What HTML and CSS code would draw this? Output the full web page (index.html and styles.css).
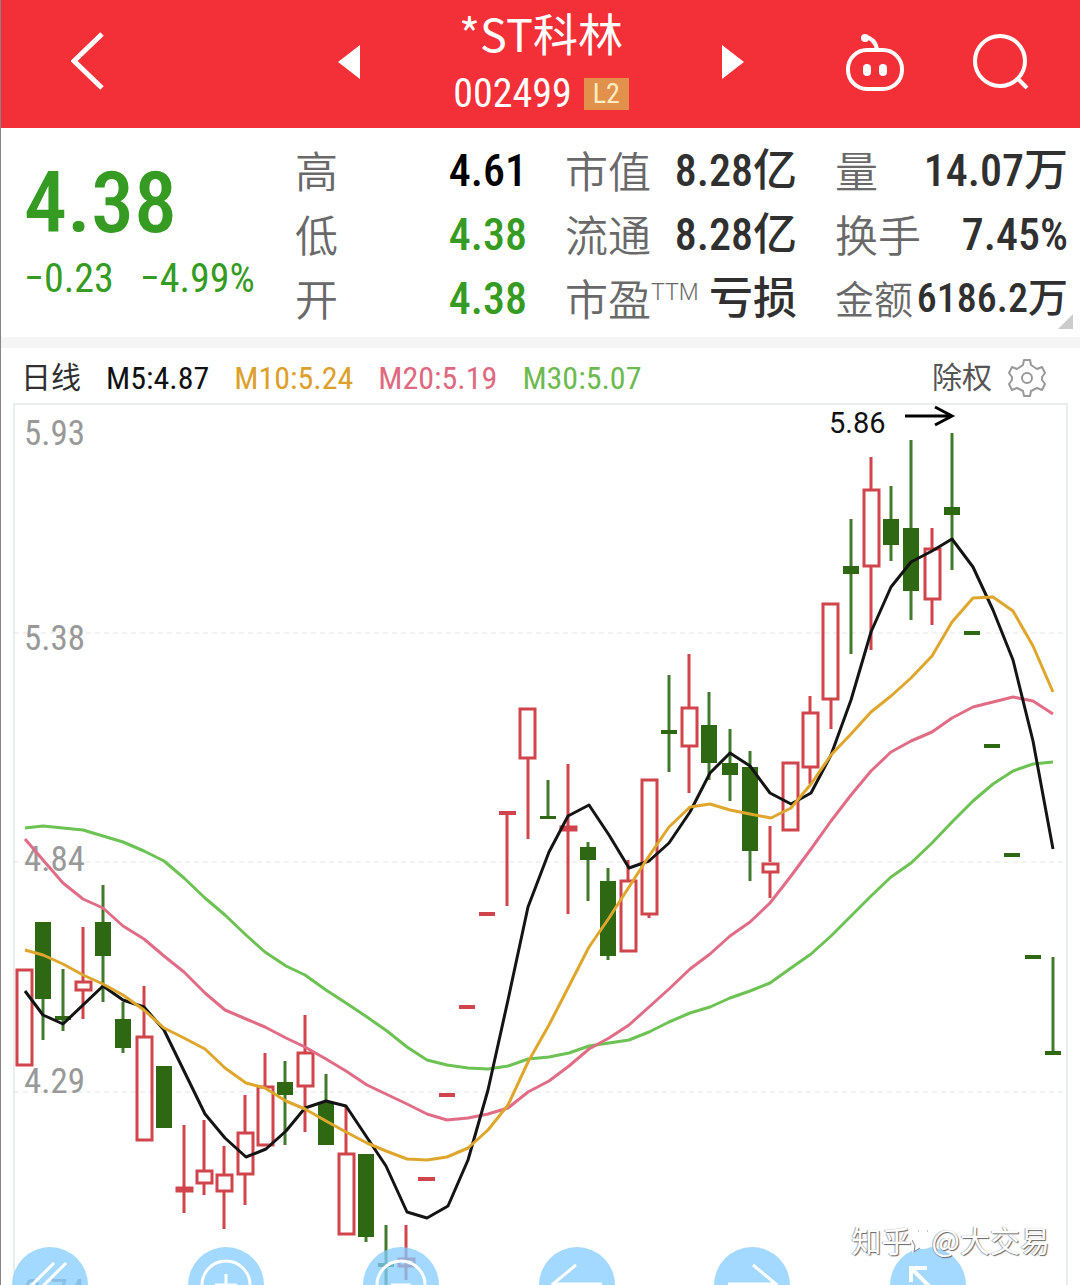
FILE: index.html
```
<!DOCTYPE html>
<html lang="zh-CN">
<head>
<meta charset="utf-8">
<meta name="viewport" content="width=device-width, initial-scale=1">
<title>*ST科林 002499</title>
<link rel="stylesheet" href="styles.css">
</head>
<body>
<header class="topbar">
  <button class="icon-btn" type="button" aria-label="返回">
    <svg width="34" height="60" viewBox="0 0 34 60"><path d="M31 2 3 29 31 56" fill="none" stroke="#fff" stroke-width="5"/></svg>
  </button>
  <div class="stock-nav">
    <button class="icon-btn" type="button" aria-label="上一只">
      <svg width="22" height="34" viewBox="0 0 22 34"><path d="M22 0v34L0 17z" fill="#fff"/></svg>
    </button>
    <div class="stock">
      <h1 class="stock-name">*ST科林</h1>
      <div class="stock-code"><span>002499</span><span class="level">L2</span></div>
    </div>
    <button class="icon-btn" type="button" aria-label="下一只">
      <svg width="22" height="34" viewBox="0 0 22 34"><path d="M0 0v34l22-17z" fill="#fff"/></svg>
    </button>
  </div>
  <div class="actions">
    <button class="icon-btn" type="button" aria-label="助手">
      <svg width="58" height="60" viewBox="0 0 58 60"><g fill="none" stroke="#fff" stroke-width="4"><rect x="2" y="18" width="54" height="39" rx="19"/><path d="M31 18C30 10 26 6 19 5" stroke-linecap="round"/></g><g fill="#fff"><circle cx="19" cy="6" r="4"/><rect x="17" y="32" width="8" height="12" rx="4"/><rect x="33" y="32" width="8" height="12" rx="4"/></g></svg>
    </button>
    <button class="icon-btn" type="button" aria-label="搜索">
      <svg width="56" height="60" viewBox="0 0 56 60"><g fill="none" stroke="#fff" stroke-width="4"><circle cx="27" cy="29" r="25"/><path d="m44 46 10 10"/></g></svg>
    </button>
  </div>
</header>
<main>
  <section class="quote">
    <div class="price">
      <strong class="last">4.38</strong>
      <div class="change"><span>−0.23</span><span>−4.99%</span></div>
    </div>
    <dl class="stats">
      <div><dt>高</dt><dd class="flat">4.61</dd></div>
      <div><dt>低</dt><dd class="down">4.38</dd></div>
      <div><dt>开</dt><dd class="down">4.38</dd></div>
    </dl>
    <dl class="stats">
      <div><dt>市值</dt><dd>8.28亿</dd></div>
      <div><dt>流通</dt><dd>8.28亿</dd></div>
      <div><dt>市盈<sup>TTM</sup></dt><dd>亏损</dd></div>
    </dl>
    <dl class="stats">
      <div><dt>量</dt><dd>14.07万</dd></div>
      <div><dt>换手</dt><dd>7.45%</dd></div>
      <div class="tight"><dt>金额</dt><dd>6186.2万</dd></div>
    </dl>
    <i class="expand"></i>
  </section>
  <section class="legend">
    <span class="period">日线</span>
    <span class="m5">M5:4.87</span>
    <span class="m10">M10:5.24</span>
    <span class="m20">M20:5.19</span>
    <span class="m30">M30:5.07</span>
    <button class="adjust" type="button">除权</button>
    <button class="icon-btn" type="button" aria-label="设置">
      <svg width="40" height="40" viewBox="0 0 40 40" fill="none" stroke="#999" stroke-width="2" stroke-linejoin="round"><path d="M17 2h6l1 5 6 4 5-2 3 6-3 4v3l3 4-3 6-5-2-6 3-1 5h-6l-1-5-6-3-5 2-3-6 3-4v-3l-3-4 3-6 5 2 6-4z"/><circle cx="20" cy="20" r="5"/></svg>
    </button>
  </section>
  <section class="chart">
    <svg class="plot" viewBox="0 403 1080 882" role="img" aria-label="日线图">
      <path class="frame" d="M14 1285V404H1067V1285"/>
      <path class="grid" d="M14 633H1067M14 862H1067M14 1092H1067"/>
      <g class="axis">
        <text x="24" y="445">5.93</text>
        <text x="24" y="650">5.38</text>
        <text x="24" y="871">4.84</text>
        <text x="24" y="1093">4.29</text>
        <text x="24" y="1304">3.74</text>
      </g>
      <path class="fall-wick" d="M43 999V1040M63 969V1031M103 885V1002M123 1002V1053M285 1061V1145M326 1074V1103M366 1237V1242M386 1225V1285M548 780V818M588 842V901M608 868V960M669 675V772M709 692V780M730 729V801M750 751V881M851 519V654M891 486V561M911 440V620M952 433V570M1053 957V1053"/>
      <path class="fall-body" d="M35 922h16v77h-16zM55 1016h16v4h-16zM95 922h16v34h-16zM115 1019h16v29h-16zM156 1066h16v62h-16zM277 1082h16v13h-16zM318 1103h16v42h-16zM358 1154h16v83h-16zM378 1263h16v4h-16zM540 816h16v3h-16zM580 847h16v13h-16zM600 881h16v75h-16zM661 730h16v4h-16zM701 725h16v38h-16zM722 763h16v12h-16zM742 767h16v84h-16zM843 566h16v8h-16zM883 519h16v26h-16zM903 528h16v63h-16zM944 507h16v8h-16zM964 631h16v4h-16zM984 744h16v4h-16zM1004 853h16v4h-16zM1025 955h16v4h-16zM1045 1051h16v4h-16z"/>
      <path class="rise-wick" d="M83 927V981M83 991V1019M144 986V1036M184 1125V1213M204 1120V1170M204 1184V1195M224 1146V1174M224 1192V1229M245 1095V1132M245 1175V1205M265 1053V1086M305 1015V1052M305 1087V1132M346 1106V1153M406 1225V1280M507 813V906M528 759V839M568 764V914M628 860V880M649 915V918M689 654V707M689 747V793M770 826V862M770 873V898M810 696V712M810 768V784M831 700V729M871 457V489M871 567V650M932 528V548M932 600V625"/>
      <path class="rise-body" d="M17 970h15v95h-15zM76 982h15v8h-15zM137 1037h15v103h-15zM177 1188h15v3h-15zM197 1171h15v12h-15zM217 1175h15v16h-15zM238 1133h15v41h-15zM258 1087h15v58h-15zM298 1053h15v33h-15zM339 1154h15v80h-15zM399 1259h15v7h-15zM520 709h15v49h-15zM561 827h15v3h-15zM621 881h15v70h-15zM642 780h15v134h-15zM682 708h15v38h-15zM763 864h15v8h-15zM783 763h15v67h-15zM803 713h15v54h-15zM823 604h15v95h-15zM864 490h15v76h-15zM925 549h15v50h-15z"/>
      <path class="rise-dash" d="M418 1179h17M439 1095h16M459 1007h16M479 914h16M499 813h17"/>
      <polyline class="ma ma30" points="25,828 43,826 63,828 83,830 103,836 123,842 144,851 164,861 184,878 205,898 225,915 246,935 265,952 286,966 305,975 326,990 346,1003 367,1017 387,1031 407,1047 427,1060 447,1065 468,1068 488,1069 508,1066 528,1059 549,1057 569,1053 589,1046 609,1043 629,1040 649,1032 669,1022 690,1013 710,1007 730,998 750,991 770,983 791,968 811,954 831,936 851,916 871,896 891,877 911,863 932,843 952,822 973,801 993,784 1013,771 1033,764 1053,762"/>
      <polyline class="ma ma20" points="25,839 43,860 63,883 83,899 103,908 123,926 144,939 164,956 184,972 205,993 225,1010 246,1019 265,1027 286,1038 305,1047 326,1059 346,1071 367,1085 407,1104 427,1114 447,1120 468,1118 488,1114 508,1108 528,1092 549,1081 569,1066 589,1049 609,1038 629,1025 649,1007 669,989 690,969 710,954 730,936 750,922 770,903 791,876 811,849 831,821 851,795 871,771 891,752 911,741 932,732 952,718 973,707 993,702 1013,697 1033,701 1053,714"/>
      <polyline class="ma ma5" points="25,991 43,1015 63,1024 103,986 123,1000 144,1007 164,1030 205,1114 225,1138 246,1157 266,1149 286,1131 305,1108 326,1101 346,1106 386,1166 407,1212 427,1218 448,1206 468,1160 488,1090 508,1000 528,907 549,852 568,816 589,805 609,835 629,868 649,861 669,843 690,812 710,773 730,753 750,766 770,793 791,804 811,793 831,755 851,700 871,632 891,587 911,562 932,551 952,539 973,567 993,610 1013,660 1033,741 1053,849"/>
      <polyline class="ma ma10" points="25,950 43,955 63,964 83,975 103,984 123,995 144,1010 164,1028 184,1038 205,1049 225,1068 246,1083 265,1088 286,1101 305,1109 326,1121 346,1132 367,1143 386,1151 407,1159 427,1160 447,1157 468,1148 488,1130 508,1105 528,1062 549,1025 568,988 589,947 609,918 629,887 649,856 669,827 690,807 710,804 730,810 750,814 771,818 791,808 811,784 831,755 851,734 871,712 891,696 911,678 932,656 952,622 973,598 993,597 1013,611 1033,646 1053,692"/>
      <text class="peak" x="829" y="433">5.86</text>
      <path class="peak-arrow" d="M905 416H951M935 407l17 9-17 9"/>
    </svg>
    <nav class="tools">
      <button class="tool" type="button" aria-label="收起"><svg viewBox="0 0 76 76"><path d="M42 16 20 38l22 22M54 16 32 38l22 22"/></svg></button>
      <button class="tool" type="button" aria-label="放大"><svg viewBox="0 0 76 76"><circle cx="38" cy="38" r="24"/><path d="M38 27v22M27 38h22"/></svg></button>
      <button class="tool" type="button" aria-label="缩小"><svg viewBox="0 0 76 76"><circle cx="38" cy="38" r="24"/><path d="M28 38h20"/></svg></button>
      <button class="tool" type="button" aria-label="左移"><svg viewBox="0 0 76 76"><path d="M37 18 14 37l23 19M14 37h49"/></svg></button>
      <button class="tool" type="button" aria-label="右移"><svg viewBox="0 0 76 76"><path d="m39 18 23 19-23 19M62 37H14"/></svg></button>
      <button class="tool" type="button" aria-label="全屏"><svg viewBox="0 0 76 76"><path class="bold" d="M21 35V21h16M22 22l32 32M39 55h15V40"/></svg></button>
    </nav>
    <div class="watermark"><span>知乎</span><svg width="20" height="36" viewBox="3 0 20 36"><path d="M4 26c-9-9-4-24 9-24s18 11 13 19c-4 7-12 8-17 6l-6 5z" fill="#fff"/><path d="m5 31 1-6-3-6M5 31l6-4M9 10h1M18 10h1" fill="none" stroke="#888"/></svg><span>@大交易</span></div>
  </section>
</main>
</body>
</html>
```
FILE: styles.css
```
* { box-sizing: border-box; }

body {
  margin: 0;
  background: #fff;
  border-left: 1px solid #8c8285;
  color: #303030;
  font-family: "Roboto Condensed", Roboto, "Noto Sans CJK SC", sans-serif;
}

button {
  border: 0;
  padding: 0;
  background: none;
  color: inherit;
  font: inherit;
}

.icon-btn { display: flex; }

/* header */
.topbar {
  display: grid;
  grid-template-columns: 267px 1fr 285px;
  align-items: center;
  height: 128px;
  padding: 0 51px 0 70px;
  background: #f33038;
  color: #fff;
}

.topbar .icon-btn { padding-bottom: 4px; }

.stock-nav {
  display: flex;
  align-items: center;
  justify-content: space-between;
}

.stock {
  display: flex;
  flex-direction: column;
  align-items: center;
  padding-top: 6px;
}

.stock-name {
  margin: 0;
  font: 400 45px/54px "Noto Sans CJK SC", sans-serif;
}

.stock-code {
  display: flex;
  align-items: center;
  gap: 12px;
  font-size: 40px;
  line-height: 68px;
}

.level {
  width: 45px;
  background: #e2914c;
  color: #ffedc0;
  font-size: 28px;
  line-height: 32px;
  text-align: center;
}

.actions {
  display: flex;
  justify-content: flex-end;
  gap: 69px;
}

/* quote */
.quote {
  position: relative;
  display: grid;
  grid-template-columns: 233fr 232fr 232fr 233fr;
  column-gap: 38px;
  padding: 11px 12px 6px 23px;
}

.price { color: #359b22; }

.last {
  display: block;
  padding-top: 20px;
  font-weight: 500;
  font-size: 86px;
  line-height: 88px;
}

.change {
  display: flex;
  gap: 26px;
  font-size: 40px;
  line-height: 64px;
  white-space: nowrap;
}

.stats { margin: 0; }

.stats div {
  display: flex;
  justify-content: space-between;
  height: 64px;
  line-height: 64px;
  white-space: nowrap;
}

.stats dt {
  color: #696969;
  font-family: "Noto Sans CJK SC", sans-serif;
  font-weight: 350;
  font-size: 43px;
  line-height: 60px;
}

.stats sup {
  font-family: Roboto, sans-serif;
  font-size: 23px;
  line-height: 0;
  vertical-align: 16px;
}

.stats dd {
  margin: 0;
  font-weight: 500;
  font-size: 44px;
}

.stats .tight dt { font-size: 39px; }
.stats .tight dd { font-size: 40px; }
.stats .flat { color: #000; }
.stats .down { color: #359b22; }

.expand {
  position: absolute;
  right: 7px;
  bottom: 8px;
  border-left: 15px solid transparent;
  border-bottom: 15px solid #ccc;
}

/* moving average legend */
.legend {
  display: flex;
  align-items: center;
  gap: 25px;
  height: 66px;
  padding: 4px 33px 0 20px;
  border-top: 11px solid #f5f5f5;
  font-size: 32px;
  line-height: 50px;
  white-space: nowrap;
}

.period, .adjust { font-size: 30px; }
.adjust { margin: 0 -10px 0 auto; color: #555; }
.m5 { color: #111; }
.m10 { color: #dca02c; }
.m20 { color: #de6a80; }
.m30 { color: #6cba50; }

/* chart */
.chart {
  position: relative;
  overflow: hidden;
  margin-left: -1px;
}

.plot { display: block; width: 100%; }
.frame { fill: none; stroke: #e9eded; stroke-width: 2; }
.grid { stroke: #e4e4e4; stroke-width: 1; stroke-dasharray: 5 4; }
.axis { fill: #999; font-size: 35px; }
.fall-wick { fill: none; stroke: #417a2c; stroke-width: 3; }
.fall-body { fill: #2f6813; }
.rise-wick { fill: none; stroke: #d0454b; stroke-width: 3; }
.rise-dash { fill: none; stroke: #d0454b; stroke-width: 4; }
.rise-body { fill: none; stroke: #d0454b; stroke-width: 3; }
.ma { fill: none; stroke-width: 3; stroke-linejoin: round; }
.ma5 { stroke: #141414; }
.ma10 { stroke: #dea62c; }
.ma20 { stroke: #e06c85; }
.ma30 { stroke: #6cc252; }
.peak { fill: #111; font-family: Roboto, sans-serif; font-size: 29px; }
.peak-arrow { fill: none; stroke: #000; stroke-width: 3; }

.tools {
  position: absolute;
  left: 12px;
  right: 114px;
  bottom: -38px;
  display: flex;
  justify-content: space-between;
}

.tool {
  width: 76px;
  height: 76px;
  border-radius: 50%;
  background: rgba(132, 204, 255, .75);
}

.tool svg {
  display: block;
  fill: none;
  stroke: #fff;
  stroke-width: 3;
}

.tool .bold { stroke-width: 4; }

.watermark {
  position: absolute;
  right: 30px;
  bottom: 26px;
  display: flex;
  align-items: center;
  color: #fff;
  font: 30px/40px "Noto Sans CJK SC", sans-serif;
  text-shadow: 1px 1px 1px #666, -1px 0 1px #aaa;
}
```
